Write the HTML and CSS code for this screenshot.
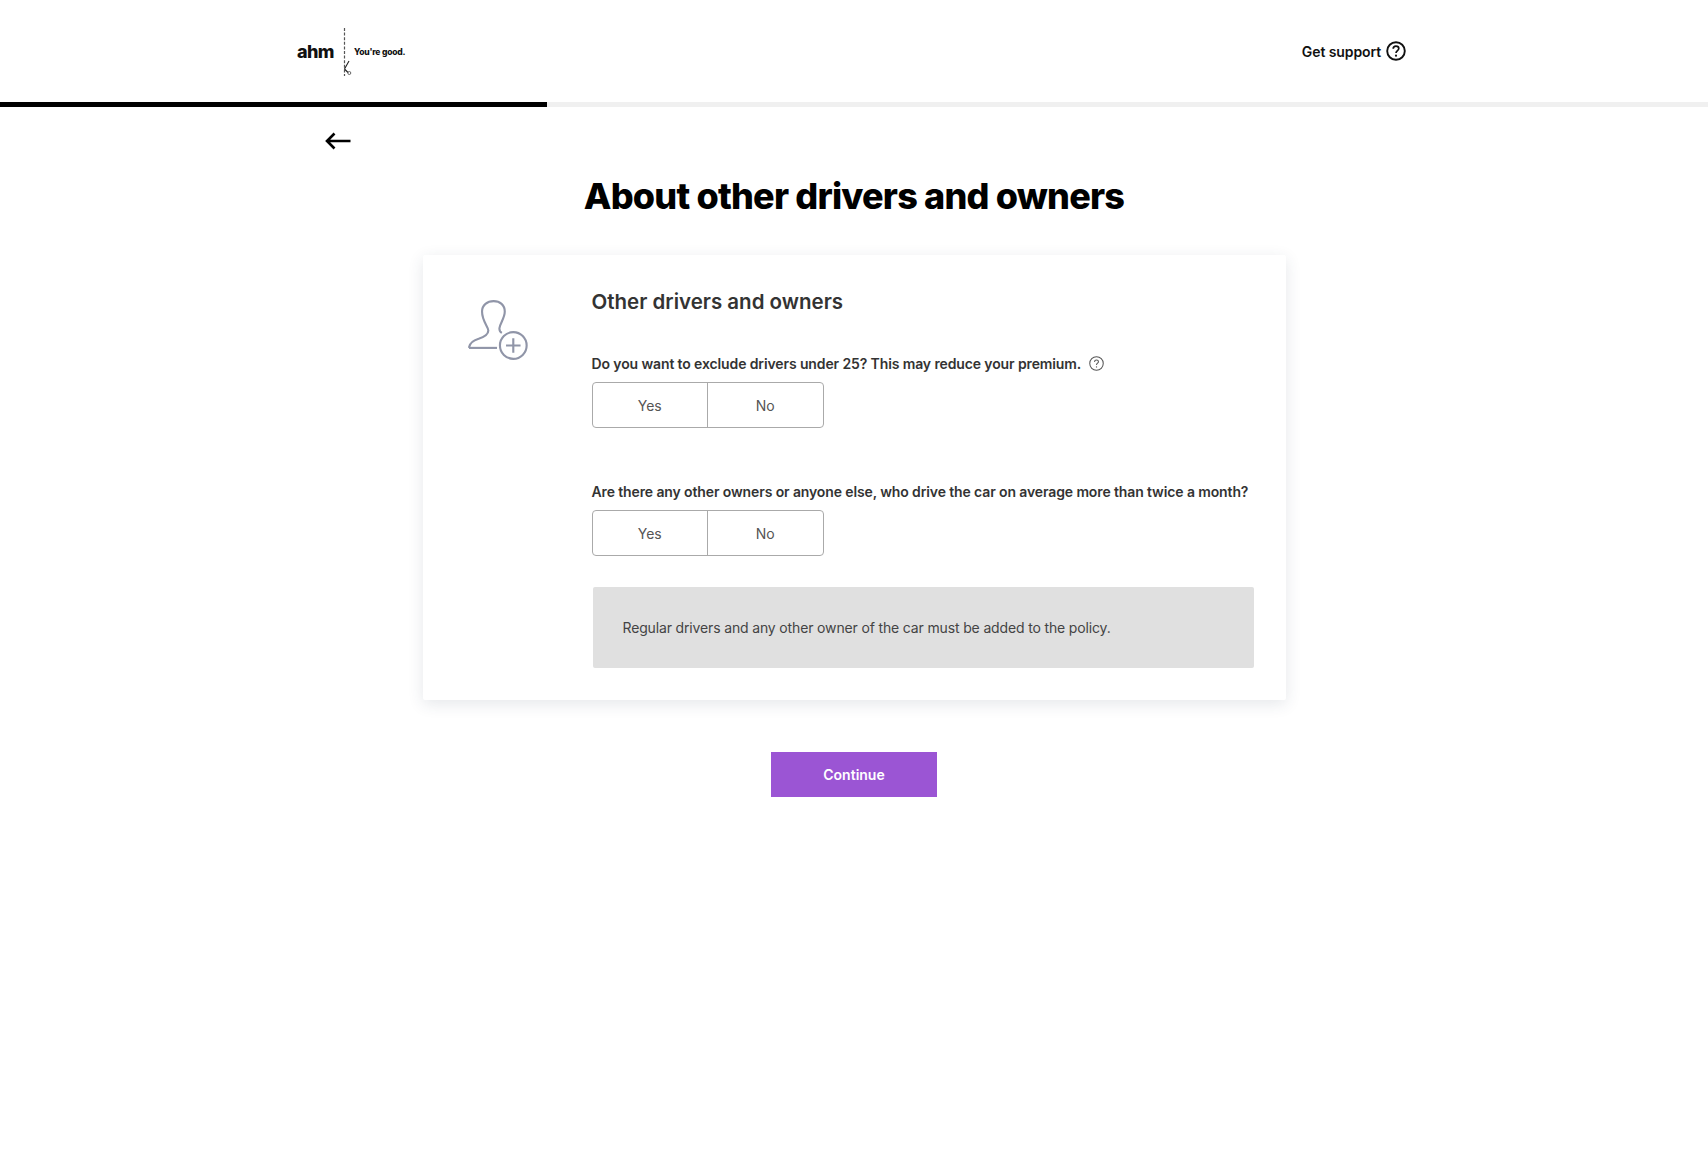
FILE: index.html
```html
<!DOCTYPE html>
<html lang="en">
  <head>
    <meta charset="UTF-8" />
    <title>About other drivers and owners</title>
    <link rel="stylesheet" href="styles.css">
  </head>
  <body>
    <header class="site-header">
      <div class="logo">
        <span class="logo-name">ahm</span>
        <span class="logo-cut">
          <svg width="10" height="48" viewBox="0 0 10 48">
            <path d="M2.5 0V48" stroke="#555" stroke-width="1.2" stroke-dasharray="3 1.6" fill="none" />
            <path d="M2.5 41L7 33M2.5 41L6 44.5" stroke="#222" stroke-width="1.1" fill="none" />
            <circle cx="7.3" cy="45" r="1.5" stroke="#444" stroke-width="0.8" fill="none" />
          </svg>
        </span>
        <span class="logo-tag">You're good.</span>
      </div>
      <a class="support" href="#">
        Get support
        <svg width="20" height="20" viewBox="0 0 20 20">
          <circle cx="10" cy="10" r="8.8" stroke="#111" stroke-width="1.9" fill="none" />
          <path d="M7.2 7.8C7.2 6.2 8.5 5.1 10 5.1C11.600 5.1 12.800 6.100 12.800 7.500C12.800 9.500 10 9.700 10 12" stroke="#111" stroke-width="1.7" fill="none" />
          <circle cx="10" cy="14.700" r="1.100" fill="#111" />
        </svg>
      </a>
    </header>
    <div class="progress"><div class="progress-fill"></div></div>

    <main class="page">
      <a class="back" href="#">
        <svg width="26" height="18" viewBox="0 0 26 18">
          <path d="M25.500 9H2M9.500 1.500L2 9L9.500 16.500" stroke="#000" stroke-width="2.600" fill="none" />
        </svg>
      </a>
      <h1 class="title">About other drivers and owners</h1>

      <section class="card">
        <div class="card-icon">
          <svg width="60" height="60" viewBox="0 0 62 62">
            <path d="M1 49.500C1.500 44 6 41.500 11 40C17 38 21 35.500 21 31.500C21 27.500 14.500 22 14.500 12C14.500 5 20 1.200 26.500 1.200C33 1.200 38 5 38 12C38 19 33 24 32.500 29C32.300 31 33 33 35 34" stroke="#9095a8" stroke-width="2.200" fill="none" />
            <path d="M1 49.500H30" stroke="#9095a8" stroke-width="2.200" fill="none" />
            <circle cx="46.800" cy="47" r="13.800" stroke="#9095a8" stroke-width="2.200" fill="none" />
            <path d="M46.800 39.500V54.500M39.300 47H54.300" stroke="#9095a8" stroke-width="2.200" fill="none" />
          </svg>
        </div>
        <div class="card-body">
          <h2 class="card-title">Other drivers and owners</h2>

          <div class="question first">
            <p class="question-label">
              Do you want to exclude drivers under 25? This may reduce your premium.
              <svg class="help" width="15" height="15" viewBox="0 0 16 16">
                <circle cx="8" cy="8" r="7.2" stroke="#555" stroke-width="1.100" fill="none" />
                <path d="M5.900 6.300C5.900 5 6.900 4.300 8 4.300C9.200 4.300 10.100 5 10.100 6.100C10.100 7.700 8 7.700 8 9.500" stroke="#555" stroke-width="1.100" fill="none" />
                <circle cx="8" cy="11.600" r="0.700" fill="#555" />
              </svg>
            </p>
            <div class="toggle">
              <button class="toggle-btn">Yes</button>
              <button class="toggle-btn">No</button>
            </div>
          </div>

          <div class="question">
            <p class="question-label">Are there any other owners or anyone else, who drive the car on average more than twice a month?</p>
            <div class="toggle">
              <button class="toggle-btn">Yes</button>
              <button class="toggle-btn">No</button>
            </div>
          </div>

          <div class="notice">Regular drivers and any other owner of the car must be added to the policy.</div>
        </div>
      </section>

      <button class="continue">Continue</button>
    </main>
  </body>
</html>
```

FILE: styles.css
```css
* {
  box-sizing: border-box;
}
body {
  margin: 0;
  background: #fff;
  color: #333;
  font-family: Inter, "Liberation Sans", sans-serif;
}

.site-header {
  height: 102px;
  padding: 0 302px 0 297px;
  display: flex;
  align-items: center;
  justify-content: space-between;
}
.logo {
  display: flex;
  align-items: center;
  color: #111;
}
.logo-name {
  font-size: 18px;
  font-weight: 800;
  letter-spacing: -0.6px;
  width: 45px;
}
.logo-cut {
  display: flex;
  width: 12px;
  margin-top: 1px;
}
.logo-tag {
  font-size: 8.500px;
  font-weight: 800;
  letter-spacing: -0.2px;
  margin-top: 1px;
}
.support {
  display: flex;
  align-items: center;
  gap: 5px;
  font-size: 14px;
  font-weight: 600;
  letter-spacing: -0.1px;
  color: #111;
  text-decoration: none;
}

.progress {
  height: 5px;
  background: #f0f0f0;
}
.progress-fill {
  width: 547px;
  height: 100%;
  background: #000;
}

.page {
  display: flex;
  flex-direction: column;
  align-items: center;
}
.back {
  align-self: flex-start;
  display: flex;
  margin: 25px 0 0 325px;
}
.title {
  margin: 21px 0 0;
  font-size: 36px;
  line-height: 50px;
  font-weight: 800;
  letter-spacing: -0.8px;
  color: #000;
}

.card {
  width: 863px;
  height: 445px;
  margin-top: 34px;
  padding: 0 32px 0 45px;
  display: flex;
  background: #fff;
  border-radius: 2px;
  box-shadow: 0 4px 16px rgba(40, 60, 80, 0.12);
}
.card-icon {
  width: 124px;
  padding-top: 45px;
}
.card-body {
  flex: 1;
}
.card-title {
  margin: 33px 0 0;
  font-size: 20.500px;
  line-height: 28px;
  font-weight: 600;
  color: #333;
}

.question {
  margin-top: 53px;
}
.question.first {
  margin-top: 37px;
}
.question-label {
  margin: 0 0 7px;
  font-size: 14px;
  line-height: 22px;
  font-weight: 600;
  letter-spacing: -0.12px;
  color: #333;
}
.help {
  vertical-align: -2px;
  margin-left: 5px;
}
.toggle {
  display: flex;
  width: 232px;
  height: 46px;
  border: 1px solid #aaa;
  border-radius: 4px;
}
.toggle-btn {
  flex: 1;
  padding: 0;
  border: 0;
  background: none;
  font-family: inherit;
  font-size: 14px;
  color: #555;
}
.toggle-btn + .toggle-btn {
  border-left: 1px solid #aaa;
}

.notice {
  margin: 31px 0 0 1px;
  height: 81px;
  padding-left: 30px;
  display: flex;
  align-items: center;
  background: #e0e0e0;
  border-radius: 2px;
  font-size: 14px;
  letter-spacing: -0.15px;
  color: #444;
}

.continue {
  width: 166px;
  height: 45px;
  margin-top: 52px;
  border: 0;
  background: #9b55d4;
  color: #fff;
  font-family: inherit;
  font-size: 14px;
  font-weight: 600;
}
```
